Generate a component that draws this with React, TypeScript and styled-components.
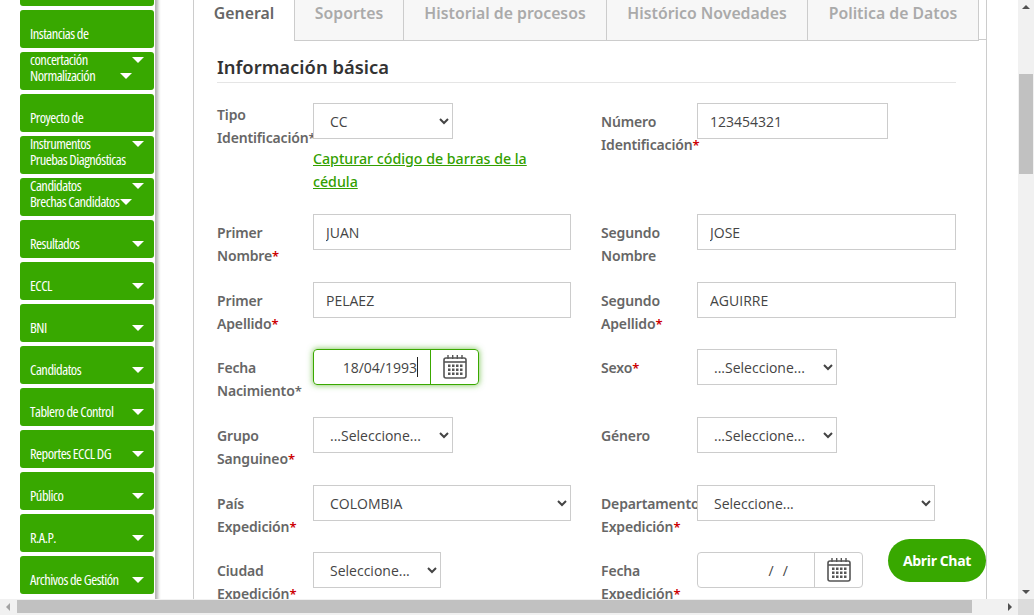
import React from "react";
import styled, { createGlobalStyle } from "styled-components";

const Global = createGlobalStyle`
  html, body { margin: 0; padding: 0; overflow: hidden; background: #fff; }
  * { box-sizing: border-box; }
`;

const Frame = styled.div`
  width: 1034px; height: 615px; display: grid;
  grid-template-columns: 1018px 16px; grid-template-rows: 599px 16px;
  overflow: hidden; position: relative; font-family: "Open Sans", sans-serif;
`;
const Viewport = styled.div`display: flex; overflow: hidden; background: #fff;`;
const Sidebar = styled.nav`
  width: 155px; flex: none; height: 640px; margin-top: -32px; padding-left: 20px;
  display: flex; flex-direction: column; gap: 4px;
  box-shadow: 3px 0 3px rgba(0,0,0,.3); background: #fff;
`;
const MenuButton = styled.a`
  flex: none; width: 134px; height: 38px; border-radius: 3px; background: #38a800; color: #fff;
  display: flex; flex-direction: column; justify-content: flex-end; padding: 0 10px 6px;
`;
const MenuLine = styled.div`
  height: 16px; line-height: 16px; display: flex; align-items: center; white-space: nowrap;
  font-size: 14.5px; font-stretch: 75%; letter-spacing: -.5px;
`;
const Caret = styled.i<{ $near?: boolean }>`
  margin-left: auto; margin-right: ${p => (p.$near ? "12px" : "0")};
  width: 0; height: 0; flex: none;
  border-left: 6px solid transparent; border-right: 6px solid transparent; border-top: 6px solid #fff;
`;

const Panel = styled.main`
  flex: none; width: 794px; margin-left: 38px; height: 700px;
  border-left: 1px solid #ccc; border-right: 1px solid #ccc;
  font-family: "Noto Sans", sans-serif;
`;
const TabBar = styled.div`display: flex; height: 40px; border-bottom: 1px solid #ccc;`;
const Tab = styled.div<{ $active?: boolean; $w: number }>`
  flex: none; width: ${p => p.$w}px; height: 41px; text-align: center; line-height: 27px;
  font-size: 15.8px; font-weight: 600; white-space: nowrap;
  color: ${p => (p.$active ? "#666" : "#aaa")};
  background: ${p => (p.$active ? "#fff" : "#f7f7f7")};
  border-right: 1px solid #ccc;
  border-bottom: ${p => (p.$active ? "0" : "1px solid #ccc")};
`;
const Body = styled.div`padding: 0 30px 0 23px;`;
const Title = styled.h2`
  margin: 10px 0 20px; height: 33px; line-height: 33.5px; border-bottom: 1px solid #e5e5e5;
  font-size: 18.4px; font-weight: 600; color: #333;
`;
const FormGrid = styled.div`
  display: grid; grid-template-columns: 354px 355px; column-gap: 30px;
  grid-template-rows: 111px 68px 67px 68px 68px 67px 60px;
`;
const Field = styled.div`display: flex; align-items: flex-start;`;
const Label = styled.label<{ $top?: boolean }>`
  flex: none; width: 96px; padding-top: ${p => (p.$top ? "0" : "7px")};
  font-size: 14px; letter-spacing: -.15px; line-height: 23px; font-weight: 600; color: #666; white-space: pre-line;
`;
const Req = styled.span<{ $plain?: boolean }>`
  font-size: 13px; color: ${p => (p.$plain ? "#666" : "#c00")};
`;
const Stack = styled.div`display: flex; flex-direction: column; width: 258px;`;
const BarcodeLink = styled.a`
  margin-top: 8px; font-size: 14.2px; line-height: 23px; font-weight: 500; color: #33a000; text-decoration: underline;
`;
const TextInput = styled.input<{ $w: number }>`
  width: ${p => p.$w}px; height: 36px; padding: 0 12px; border: 1px solid #ccc; border-radius: 0;
  font: 14px "Open Sans", sans-serif; color: #444; background: #fff; outline: none;
`;
const Picker = styled.select<{ $w: number }>`
  width: ${p => p.$w}px; height: 36px; padding: 0 12px; border: 1px solid #ccc; border-radius: 0;
  font: 14px "Open Sans", sans-serif; color: #444; background: #fff; outline: none;
`;
const DateBox = styled.div<{ $focus?: boolean }>`
  width: 166px; height: 36px; display: flex; border-radius: 4px;
  border: 1px solid ${p => (p.$focus ? "#3aa800" : "#ccc")};
  box-shadow: ${p => (p.$focus ? "0 0 6px rgba(58,168,0,.7)" : "none")};
`;
const DateValue = styled.div<{ $pad: number }>`
  width: 116px; display: flex; align-items: center; justify-content: flex-end; padding-right: ${p => p.$pad}px;
  font-size: 14px; word-spacing: 1px; color: #444; font-family: "Open Sans", sans-serif; white-space: pre;
`;
const Cursor = styled.i`display: block; width: 1px; height: 20px; background: #222;`;
const DateButton = styled.div<{ $focus?: boolean }>`
  flex: 1; display: flex; align-items: center; justify-content: center;
  border-left: 1px solid ${p => (p.$focus ? "#3aa800" : "#ccc")};
`;
const Chat = styled.button`
  position: absolute; left: 888px; top: 539px; width: 98px; height: 43px; border: 0; border-radius: 22px;
  background: #38a800; color: #fff; font: 700 14px "Open Sans", sans-serif; letter-spacing: -.4px; padding: 0;
`;

const VBar = styled.div`background: #f1f1f1; position: relative;`;
const VThumb = styled.div`position: absolute; left: 1px; right: 1px; top: 74px; height: 100px; background: #c1c1c1;`;
const HBar = styled.div`background: #f1f1f1; position: relative;`;
const HThumb = styled.div`position: absolute; left: 17px; width: 955px; top: 1px; height: 13px; background: #c1c1c1;`;
const Corner = styled.div`background: #dcdcdc;`;
const Arrow = styled.i<{ $dir: "up" | "down" | "left" | "right" }>`
  position: absolute; width: 0; height: 0; border: 4px solid transparent;
  ${p => p.$dir === "up" && "left: 4px; top: 5px; border-top: 0; border-bottom: 4px solid #505050;"}
  ${p => p.$dir === "down" && "left: 4px; bottom: 5px; border-bottom: 0; border-top: 4px solid #505050;"}
  ${p => p.$dir === "left" && "left: 6px; top: 4px; border-left: 0; border-right: 4px solid #a3a3a3;"}
  ${p => p.$dir === "right" && "right: 6px; top: 4px; border-right: 0; border-left: 4px solid #505050;"}
`;

const CalendarIcon = () => (
  <svg width="24" height="24" viewBox="0 0 24 24" fill="none">
    <rect x="1" y="3" width="22" height="20" rx="2" stroke="#555" strokeWidth="1.6" />
    <path d="M1 7h22" stroke="#555" strokeWidth="1.6" />
    <path d="M5 0v4M9.700 0v4M14.300 0v4M19 0v4" stroke="#555" strokeWidth="1.4" />
    <path
      d="M5 9.500h2.500v2.500H5zM9 9.500h2.500v2.500H9zM13 9.500h2.500v2.500H13zM17 9.500h2.500v2.500H17zM5 13.500h2.500v2.500H5zM9 13.500h2.500v2.500H9zM13 13.500h2.500v2.500H13zM17 13.500h2.500v2.500H17zM5 17.500h2.500V20H5zM9 17.500h2.500V20H9zM13 17.500h2.500V20H13zM17 17.500h2.500V20H17z"
      fill="#555"
    />
  </svg>
);

type Line = { t: string; caret?: boolean; near?: boolean };
const menu: Line[][] = [
  [{ t: "" }],
  [{ t: "Instancias de" }],
  [{ t: "concertación", caret: true }, { t: "Normalización", caret: true, near: true }],
  [{ t: "Proyecto de" }],
  [{ t: "Instrumentos", caret: true }, { t: "Pruebas Diagnósticas" }],
  [{ t: "Candidatos", caret: true }, { t: "Brechas Candidatos", caret: true, near: true }],
  [{ t: "Resultados", caret: true }],
  [{ t: "ECCL", caret: true }],
  [{ t: "BNI", caret: true }],
  [{ t: "Candidatos", caret: true }],
  [{ t: "Tablero de Control", caret: true }],
  [{ t: "Reportes ECCL DG", caret: true }],
  [{ t: "Público", caret: true }],
  [{ t: "R.A.P.", caret: true }],
  [{ t: "Archivos de Gestión", caret: true }],
];

const Sel = ({ w, v }: { w: number; v: string }) => (
  <Picker $w={w} defaultValue={v}><option>{v}</option></Picker>
);

export default function App() {
  return (
    <Frame>
      <Global />
      <Viewport>
        <Sidebar>
          {menu.map((lines, i) => (
            <MenuButton key={i}>
              {lines.map((l, j) => (
                <MenuLine key={j}>{l.t}{l.caret && <Caret $near={l.near} />}</MenuLine>
              ))}
            </MenuButton>
          ))}
        </Sidebar>
        <Panel>
          <TabBar>
            <Tab $active $w={101}>General</Tab>
            <Tab $w={109}>Soportes</Tab>
            <Tab $w={203}>Historial de procesos</Tab>
            <Tab $w={201}>Histórico Novedades</Tab>
            <Tab $w={171}>Politica de Datos</Tab>
          </TabBar>
          <Body>
            <Title>Información básica</Title>
            <FormGrid>
              <Field>
                <Label $top>{"Tipo\nIdentificación"}<Req $plain>*</Req></Label>
                <Stack>
                  <Sel w={140} v="CC" />
                  <BarcodeLink>Capturar código de barras de la cédula</BarcodeLink>
                </Stack>
              </Field>
              <Field>
                <Label>{"Número\nIdentificación"}<Req>*</Req></Label>
                <TextInput $w={191} defaultValue="123454321" />
              </Field>
              <Field>
                <Label>{"Primer\nNombre"}<Req>*</Req></Label>
                <TextInput $w={258} defaultValue="JUAN" />
              </Field>
              <Field>
                <Label>{"Segundo\nNombre"}</Label>
                <TextInput $w={259} defaultValue="JOSE" />
              </Field>
              <Field>
                <Label>{"Primer\nApellido"}<Req>*</Req></Label>
                <TextInput $w={258} defaultValue="PELAEZ" />
              </Field>
              <Field>
                <Label>{"Segundo\nApellido"}<Req>*</Req></Label>
                <TextInput $w={259} defaultValue="AGUIRRE" />
              </Field>
              <Field>
                <Label>{"Fecha\nNacimiento"}<Req $plain>*</Req></Label>
                <DateBox $focus>
                  <DateValue $pad={12}>18/04/1993<Cursor /></DateValue>
                  <DateButton $focus><CalendarIcon /></DateButton>
                </DateBox>
              </Field>
              <Field>
                <Label>Sexo<Req>*</Req></Label>
                <Sel w={140} v="...Seleccione..." />
              </Field>
              <Field>
                <Label>{"Grupo\nSanguineo"}<Req>*</Req></Label>
                <Sel w={140} v="...Seleccione..." />
              </Field>
              <Field>
                <Label>Género</Label>
                <Sel w={140} v="...Seleccione..." />
              </Field>
              <Field>
                <Label>{"País\nExpedición"}<Req>*</Req></Label>
                <Sel w={258} v="COLOMBIA" />
              </Field>
              <Field>
                <Label>{"Departamento\nExpedición"}<Req>*</Req></Label>
                <Sel w={238} v="Seleccione..." />
              </Field>
              <Field>
                <Label>{"Ciudad\nExpedición"}<Req>*</Req></Label>
                <Sel w={128} v="Seleccione..." />
              </Field>
              <Field>
                <Label>{"Fecha\nExpedición"}<Req>*</Req></Label>
                <DateBox>
                  <DateValue $pad={26}>{"/  /"}</DateValue>
                  <DateButton><CalendarIcon /></DateButton>
                </DateBox>
              </Field>
            </FormGrid>
          </Body>
        </Panel>
      </Viewport>
      <VBar><Arrow $dir="up" /><VThumb /><Arrow $dir="down" /></VBar>
      <HBar><Arrow $dir="left" /><HThumb /><Arrow $dir="right" /></HBar>
      <Corner />
      <Chat>Abrir Chat</Chat>
    </Frame>
  );
}
